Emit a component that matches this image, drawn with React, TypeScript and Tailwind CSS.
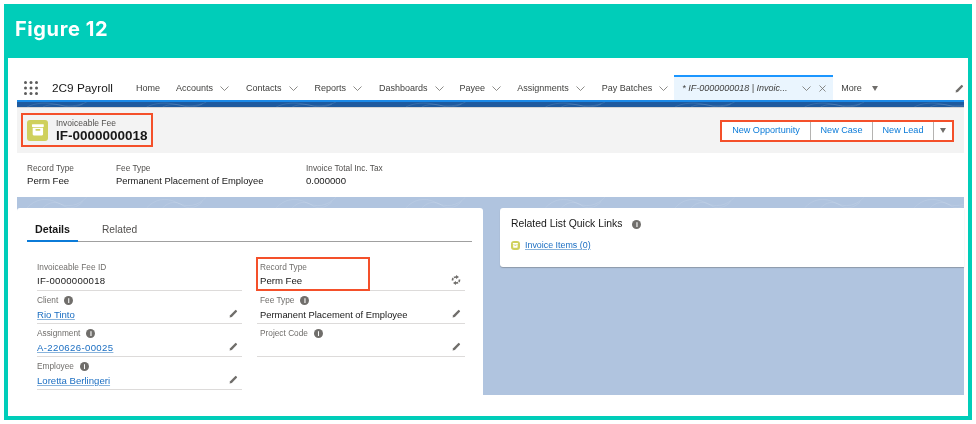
const navItems = [
  { label: "Accounts", ml: "ml-[16px]" },
  { label: "Contacts", ml: "ml-[17px]" },
  { label: "Reports", ml: "ml-[17px]" },
  { label: "Dashboards", ml: "ml-[17px]" },
  { label: "Payee", ml: "ml-[16px]" },
  { label: "Assignments", ml: "ml-[16px]" },
  { label: "Pay Batches", ml: "ml-[17px]" },
];

const Chevron = ({ className = "" }: { className?: string }) => (
  <svg viewBox="0 0 9 5" className={`w-[9px] h-[5px] shrink-0 ${className}`}>
    <path d="M0.5 0.5L4.5 4.5L8.5 0.5" fill="none" stroke="#706e6b" strokeWidth="0.8" />
  </svg>
);

const Caret = ({ className = "" }: { className?: string }) => (
  <span
    className={`w-0 h-0 shrink-0 border-x-[3.5px] border-x-transparent border-t-[5px] border-t-[#706e6b] ${className}`}
  />
);

const Pencil = ({ className = "" }: { className?: string }) => (
  <svg viewBox="0 0 12 12" className={`w-[9px] h-[9px] shrink-0 ${className}`}>
    <path d="M0.8 11.2l.7-3L8.2 1.5a1 1 0 0 1 1.4 0l.9.9a1 1 0 0 1 0 1.4L3.8 10.5z" fill="#706e6b" />
  </svg>
);

const Info = ({ className = "" }: { className?: string }) => (
  <span
    className={`inline-flex w-[9px] h-[9px] rounded-full bg-[#706e6b] items-center justify-center text-white text-[7px] leading-none font-bold ${className}`}
  >
    i
  </span>
);

const ArchiveIcon = ({ size }: { size: string }) => (
  <span className={`${size} shrink-0 rounded-[3px] bg-[#cfd05c] flex items-center justify-center`}>
    <svg viewBox="0 0 20 20" className="w-[75%] h-[75%]">
      <rect x="2.5" y="3" width="15" height="3.4" rx="0.6" fill="#fff" />
      <path d="M3.4 7.4h13.2v8.2a1.4 1.4 0 0 1-1.4 1.4H4.8a1.4 1.4 0 0 1-1.4-1.4z" fill="#fff" />
      <rect x="6.8" y="9" width="6.4" height="2" rx="1" fill="#cfd05c" />
    </svg>
  </span>
);

// the faint contour texture on the salesforce page background
const Band = ({ opacity = "0.22" }: { opacity?: string }) => (
  <svg className="w-full h-full" preserveAspectRatio="none" viewBox="0 0 950 12">
    {[40, 160, 290, 420, 560, 690, 820, 930].map((x) => (
      <path
        key={x}
        d={`M${x - 30} 12c8-10 20-12 30-6s22 4 30-6M${x - 14} 12c6-7 14-8 20-3s14 3 20-4`}
        fill="none"
        stroke="#fff"
        strokeOpacity={opacity}
        strokeWidth="0.7"
      />
    ))}
  </svg>
);

const Field = ({
  label,
  value,
  link,
  info,
  inset,
  icon,
  valueClass = "text-[9.6px]",
}: {
  label: string;
  value?: string;
  link?: boolean;
  info?: boolean;
  inset?: boolean;
  icon?: React.ReactNode;
  valueClass?: string;
}) => (
  <div className="h-[33px] border-b border-[#dddbda] flex items-end justify-between pr-[4px]">
    <div className={`min-w-0 ${info ? "" : "pb-[1px]"} ${inset ? "pl-[3px]" : ""}`}>
      <div className="flex items-center text-[8.3px] leading-[12px] text-[#706e6b] h-[12px]">
        {label}
        {info && <Info className="ml-[6px]" />}
      </div>
      <div
        className={`leading-[16px] h-[16px] ${valueClass} ${info ? "mt-[1px]" : ""} ${
          link ? "text-[#1b6ec2] underline decoration-[#8ab4dc]" : "text-[#181818]"
        }`}
      >
        {value}
      </div>
    </div>
    <span className="pb-[5px]">{icon}</span>
  </div>
);

const SwitchIcon = () => (
  <svg viewBox="0 0 10 10" className="w-[10px] h-[10px] shrink-0">
    <path d="M1.5 5.5C1.5 3 3 2 5 2M8.5 4.5C8.5 7 7 8 5 8" fill="none" stroke="#706e6b" strokeWidth="1.7" strokeDasharray="2.4 1" />
    <path d="M5 0v4l3-2zM5 10V6L2 8z" fill="#706e6b" />
  </svg>
);

export default function App() {
  return (
    <div className="w-[976px] h-[424px] bg-white p-1 font-['Liberation_Sans',sans-serif] overflow-hidden blur-[0.3px]">
      <div className="w-[968px] h-[416px] bg-[#00cdb9] flex flex-col">
        <div className="h-[54px] shrink-0 pl-[11px] pt-[12px] text-white text-[20px] leading-[26px] font-bold tracking-[0.6px] font-['Inter',sans-serif]">
          Figure 12
        </div>
        <div className="mx-1 mb-1 flex-1 bg-white pl-[9px] pr-[4px] flex flex-col min-h-0">
          {/* app nav */}
          <div className="h-[42px] shrink-0 flex items-end text-[#3e3e3c] text-[9px]">
            <div className="h-[25px] flex items-center flex-1 min-w-0 pt-[2px]">
              <svg viewBox="0 0 14 14" className="w-[14px] h-[14px] ml-[7px] -mt-[2px] shrink-0">
                {[1.5, 7, 12.5].flatMap((y) =>
                  [1.5, 7, 12.5].map((x) => <circle key={`${x}-${y}`} cx={x} cy={y} r="1.5" fill="#5c5c5c" />),
                )}
              </svg>
              <span className="ml-[14px] text-[11.8px] text-[#181818] whitespace-nowrap">2C9 Payroll</span>
              <span className="ml-[23px]">Home</span>
              {navItems.map((item) => (
                <span key={item.label} className={`flex items-center whitespace-nowrap ${item.ml}`}>
                  {item.label}
                  <Chevron className="ml-[7px]" />
                </span>
              ))}
              <div className="ml-[6px] w-[159px] h-[25px] -mt-[2px] shrink-0 bg-[#eaf5fe] border-t-2 border-[#1b96ff] flex items-center pl-[8px] italic text-[#3e3e3c]">
                <span className="whitespace-nowrap">* IF-0000000018 | Invoic...</span>
                <Chevron className="ml-auto" />
                <svg viewBox="0 0 7 7" className="ml-[8px] mr-[7px] w-[7px] h-[7px] shrink-0">
                  <path d="M0.5 0.5L6.5 6.5M6.5 0.5L0.5 6.5" fill="none" stroke="#706e6b" strokeWidth="0.8" />
                </svg>
              </div>
              <span className="ml-[8px]">More</span>
              <Caret className="ml-[10px]" />
              <Pencil className="ml-auto" />
            </div>
          </div>

          {/* brand strip */}
          <div className="h-[8px] shrink-0 bg-[#1f5a9e] border-t-2 border-[#1b8ae8] border-b border-b-[#d5d5d5] overflow-hidden">
            <Band />
          </div>

          {/* record header */}
          <div className="h-[45px] shrink-0 bg-[#f3f3f3] flex items-center justify-between pl-[4px] pr-[10px]">
            <div className="w-[132px] h-[34px] mb-[1px] border-2 border-[#f4502a] flex items-center pl-[4px]">
              <ArchiveIcon size="w-[21px] h-[21px]" />
              <div className="ml-[8px]">
                <div className="text-[8.5px] leading-[11px] text-[#514f4d]">Invoiceable Fee</div>
                <div className="text-[13.5px] leading-[14px] font-bold text-[#181818] whitespace-nowrap">IF-0000000018</div>
              </div>
            </div>
            <div className="w-[234px] h-[22px] border-2 border-[#f4502a] bg-white flex items-stretch text-[#0b7bd8] text-[9.1px]">
              <span className="w-[89px] flex items-center justify-center border-r border-[#b5b3b1]">New Opportunity</span>
              <span className="w-[62px] flex items-center justify-center border-r border-[#b5b3b1]">New Case</span>
              <span className="w-[61px] flex items-center justify-center border-r border-[#b5b3b1]">New Lead</span>
              <span className="flex-1 flex items-center justify-center">
                <Caret />
              </span>
            </div>
          </div>

          {/* highlights */}
          <div className="h-[44px] shrink-0 bg-white flex pl-[10px] pt-[9px] text-[#181818]">
            <div className="w-[89px]">
              <div className="text-[8.3px] leading-[12px] text-[#514f4d]">Record Type</div>
              <div className="text-[9.6px] leading-[13px]">Perm Fee</div>
            </div>
            <div className="w-[190px]">
              <div className="text-[8.3px] leading-[12px] text-[#514f4d]">Fee Type</div>
              <div className="text-[9.4px] leading-[13px]">Permanent Placement of Employee</div>
            </div>
            <div>
              <div className="text-[8.3px] leading-[12px] text-[#514f4d]">Invoice Total Inc. Tax</div>
              <div className="text-[9.6px] leading-[13px]">0.000000</div>
            </div>
          </div>

          {/* page body */}
          <div className="h-[198px] shrink-0 bg-[#b0c4df] flex flex-col">
            <div className="h-[11px] shrink-0 overflow-hidden">
              <Band opacity="0.14" />
            </div>
            <div className="flex-1 flex items-start min-h-0">
              <div className="w-[466px] h-full shrink-0 bg-white rounded-t-[3px] pl-[10px] pr-[11px]">
                <div className="h-[34px] border-b border-[#a0a0a0] flex items-stretch">
                  <span className="w-[51px] -mb-px border-b-2 border-[#0b7bd8] flex items-center justify-center pt-[10px] text-[10.7px] font-bold text-[#181818]">
                    Details
                  </span>
                  <span className="ml-[24px] flex items-center pt-[10px] text-[10.2px] text-[#514f4d]">Related</span>
                </div>
                <div className="mt-[16px] ml-[10px] mr-[7px] grid grid-cols-[205px_208px] gap-x-[15px]">
                  <div>
                    <Field label="Invoiceable Fee ID" value="IF-0000000018" valueClass="text-[9.6px] tracking-[0.25px]" />
                    <Field label="Client" value="Rio Tinto" link info icon={<Pencil />} />
                    <Field label="Assignment" value="A-220626-00025" link info icon={<Pencil />} valueClass="text-[9.6px] tracking-[0.35px]" />
                    <Field label="Employee" value="Loretta Berlingeri" link info icon={<Pencil />} />
                  </div>
                  <div>
                    <div className="relative">
                      <Field label="Record Type" value="Perm Fee" inset icon={<SwitchIcon />} />
                      <div className="absolute left-[-1px] top-[-1px] w-[114px] h-[34px] border-2 border-[#f4502a]" />
                    </div>
                    <Field label="Fee Type" value="Permanent Placement of Employee" inset info icon={<Pencil />} valueClass="text-[9.4px]" />
                    <Field label="Project Code" inset info icon={<Pencil />} />
                  </div>
                </div>
              </div>
              <div className="ml-[17px] flex-1 h-[59px] bg-white rounded-l-[3px] shadow-[0_1px_1px_rgba(90,90,90,0.4)] pl-[11px] pt-[9px]">
                <div className="flex items-center text-[10.4px] leading-[14px] text-[#181818]">
                  Related List Quick Links
                  <Info className="ml-[10px]" />
                </div>
                <div className="mt-[8px] flex items-center">
                  <ArchiveIcon size="w-[9px] h-[9px]" />
                  <span className="ml-[5px] text-[8.9px] leading-[12px] text-[#1b6ec2] underline decoration-[#8ab4dc]">
                    Invoice Items (0)
                  </span>
                </div>
              </div>
            </div>
          </div>
        </div>
      </div>
    </div>
  );
}
